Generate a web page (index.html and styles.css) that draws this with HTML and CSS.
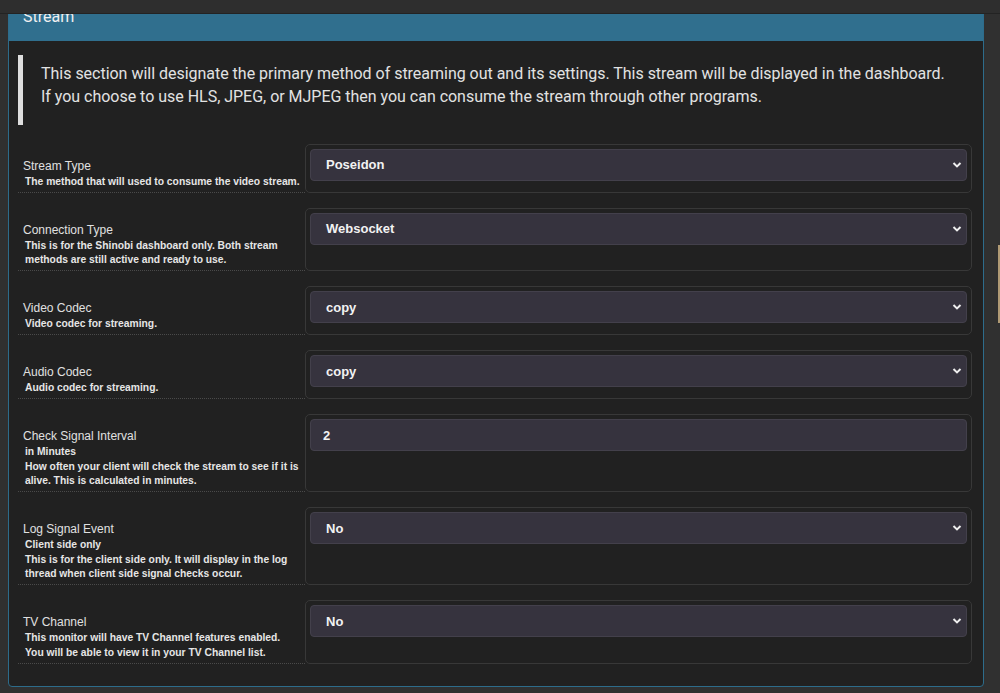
FILE: index.html
```html
<!DOCTYPE html>
<html>
<head>
<meta charset="utf-8">
<link rel="stylesheet" href="styles.css">
</head>
<body>
<div class="topbar"></div>
<div class="edge-tab"></div>
<div class="page">
  <div class="panel">
    <div class="panel-heading">Stream</div>
    <div class="panel-body">
      <blockquote class="note">
        <p>This section will designate the primary method of streaming out and its settings. This stream will be displayed in the dashboard. If you choose to use HLS, JPEG, or MJPEG then you can consume the stream through other programs.</p>
      </blockquote>

      <div class="row">
        <div class="label-cell">
          <div class="label">Stream Type</div>
          <div class="desc">The method that will used to consume the video stream.</div>
        </div>
        <div class="field-box">
          <div class="select"><span>Poseidon</span><svg class="chev" viewBox="0 0 10 6" width="10" height="6"><path d="M1.5 1 L5 4.4 L8.5 1" fill="none" stroke="#eee" stroke-width="2"/></svg></div>
        </div>
      </div>

      <div class="row">
        <div class="label-cell">
          <div class="label">Connection Type</div>
          <div class="desc">This is for the Shinobi dashboard only. Both stream methods are still active and ready to use.</div>
        </div>
        <div class="field-box">
          <div class="select"><span>Websocket</span><svg class="chev" viewBox="0 0 10 6" width="10" height="6"><path d="M1.5 1 L5 4.4 L8.5 1" fill="none" stroke="#eee" stroke-width="2"/></svg></div>
        </div>
      </div>

      <div class="row">
        <div class="label-cell">
          <div class="label">Video Codec</div>
          <div class="desc">Video codec for streaming.</div>
        </div>
        <div class="field-box">
          <div class="select"><span>copy</span><svg class="chev" viewBox="0 0 10 6" width="10" height="6"><path d="M1.5 1 L5 4.4 L8.5 1" fill="none" stroke="#eee" stroke-width="2"/></svg></div>
        </div>
      </div>

      <div class="row">
        <div class="label-cell">
          <div class="label">Audio Codec</div>
          <div class="desc">Audio codec for streaming.</div>
        </div>
        <div class="field-box">
          <div class="select"><span>copy</span><svg class="chev" viewBox="0 0 10 6" width="10" height="6"><path d="M1.5 1 L5 4.4 L8.5 1" fill="none" stroke="#eee" stroke-width="2"/></svg></div>
        </div>
      </div>

      <div class="row">
        <div class="label-cell">
          <div class="label">Check Signal Interval</div>
          <div class="desc">in Minutes</div>
          <div class="desc">How often your client will check the stream to see if it is alive. This is calculated in minutes.</div>
        </div>
        <div class="field-box">
          <div class="input">2</div>
        </div>
      </div>

      <div class="row">
        <div class="label-cell">
          <div class="label">Log Signal Event</div>
          <div class="desc">Client side only</div>
          <div class="desc">This is for the client side only. It will display in the log thread when client side signal checks occur.</div>
        </div>
        <div class="field-box">
          <div class="select"><span>No</span><svg class="chev" viewBox="0 0 10 6" width="10" height="6"><path d="M1.5 1 L5 4.4 L8.5 1" fill="none" stroke="#eee" stroke-width="2"/></svg></div>
        </div>
      </div>

      <div class="row">
        <div class="label-cell">
          <div class="label">TV Channel</div>
          <div class="desc">This monitor will have TV Channel features enabled. You will be able to view it in your TV Channel list.</div>
        </div>
        <div class="field-box">
          <div class="select"><span>No</span><svg class="chev" viewBox="0 0 10 6" width="10" height="6"><path d="M1.5 1 L5 4.4 L8.5 1" fill="none" stroke="#eee" stroke-width="2"/></svg></div>
        </div>
      </div>
    </div>
  </div>
</div>
</body>
</html>
```

FILE: styles.css
```css
html, body {
  margin: 0;
  padding: 0;
  background: #303030;
  height: 693px;
  overflow: hidden;
}

.topbar {
  position: fixed;
  top: 0;
  left: 0;
  right: 0;
  height: 13px;
  background: #2e2e2e;
  border-bottom: 1px solid #232323;
  z-index: 5;
}

.edge-tab {
  position: fixed;
  right: 0;
  top: 245px;
  width: 2px;
  height: 78px;
  background: #b09a74;
}

.page {
  padding: 0 16px 0 8px;
}

.panel {
  border: 1px solid #2d6c8b;
  border-radius: 4px;
  background: #212121;
  overflow: hidden;
}

.panel-heading {
  height: 40px;
  box-sizing: border-box;
  padding: 6px 14px 0 14px;
  background: #306f8e;
  color: #f0f0f0;
  font-family: Roboto, "Liberation Sans", sans-serif;
  font-size: 16px;
  line-height: 20px;
}

.panel-body {
  padding: 14px 11px 22px 9px;
}

.note {
  margin: 0 0 19.4px 0;
  padding: 8px 18px 6px 18px;
  border-left: 5px solid #dedede;
  font-family: Roboto, "Liberation Sans", sans-serif;
  font-size: 16px;
  line-height: 22.8px;
  color: #e2e2e2;
  letter-spacing: -0.02px;
}

.note p {
  margin: 0 0 10px 0;
}

.row {
  display: flex;
  align-items: stretch;
  margin-bottom: 15px;
}

.row:last-child {
  margin-bottom: 0;
}

.label-cell {
  flex: 0 0 287px;
  box-sizing: border-box;
  padding: 14px 5px 2.5px 5px;
  border-bottom: 1px dotted #4a4a4a;
  font-family: "Liberation Sans", Arial, sans-serif;
  color: #e0e0e0;
}

.label {
  font-size: 12px;
  line-height: 17px;
}

.desc {
  padding-left: 2px;
  font-size: 10.3px;
  font-weight: bold;
  line-height: 14.5px;
  color: #e6e6e6;
}

.field-box {
  flex: 1;
  border: 1px solid #383838;
  border-radius: 5px;
  padding: 4px 4px 11px 4px;
}

.select, .input {
  height: 32px;
  box-sizing: border-box;
  border: 1px solid #43404b;
  border-radius: 4px;
  background: #36333e;
  color: #f2f2f2;
  font-family: "Liberation Sans", Arial, sans-serif;
  font-weight: bold;
  font-size: 13px;
  display: flex;
  align-items: center;
}

.select {
  justify-content: space-between;
  padding: 0 4px 0 15px;
}

.input {
  padding: 0 12px;
}

.chev {
  display: block;
}
```
